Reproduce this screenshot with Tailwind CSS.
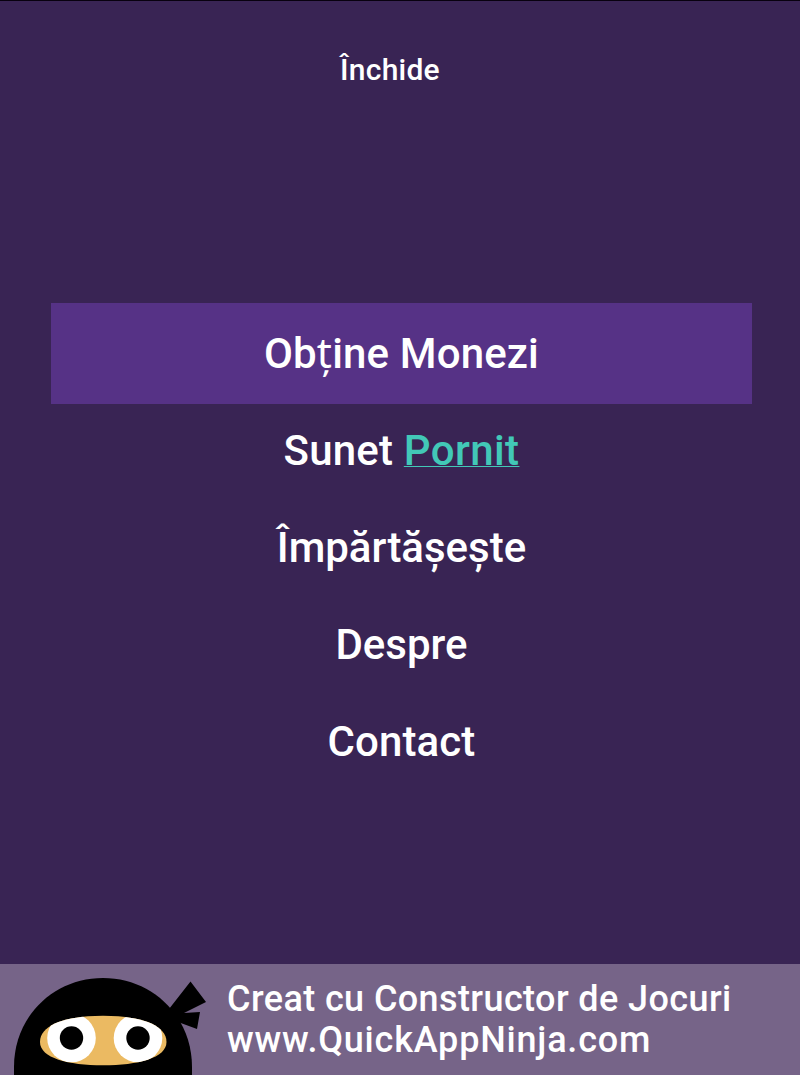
<!DOCTYPE html>
<html lang="ro">
<head>
  <meta charset="UTF-8" />
  <title>Meniu</title>
  <meta name="viewport" content="width=device-width, initial-scale=1" />
  <script src="https://cdn.jsdelivr.net/npm/@tailwindcss/browser@4"></script>
</head>
<body class="bg-[#392454] text-white font-['Roboto',sans-serif] font-medium">
  <div class="w-[800px] h-[1075px] flex flex-col overflow-hidden border-t border-[#08000f]">
    <header class="h-[302px] pt-[49px] pr-5 text-center">
      <button class="text-[30px] leading-10 tracking-[0.25px]">Închide</button>
    </header>

    <nav class="ml-[51px] w-[701px] flex flex-col text-[42px] text-center whitespace-nowrap">
      <a class="h-[101px] leading-[101px] tracking-[0.15px] bg-[#563286]">Ob<span class="font-['Noto_Sans',sans-serif] font-normal leading-none">ț</span>ine Monezi</a>
      <a class="h-[93px] mb-1 leading-[93px] tracking-[0.2px]">Sunet <span class="text-[#42c8b7] tracking-[0.4px] underline decoration-1 underline-offset-[1px] [text-decoration-skip-ink:none]">Pornit</span></a>
      <a class="h-[93px] mb-1 leading-[93px]">Împărtășește</a>
      <a class="h-[93px] mb-1 leading-[93px]">Despre</a>
      <a class="h-[93px] leading-[93px] tracking-[0.1px]">Contact</a>
    </nav>

    <footer class="mt-auto h-[111px] shrink-0 flex bg-[#766488]">
      <svg class="w-[227px] h-[111px] shrink-0" viewBox="0 964 227 111">
        <!-- head -->
        <path d="M14 1076V1067C14 1016 54 978 103 978S192 1016 192 1067V1076Z" fill="#000" />
        <!-- knot -->
        <path d="M169 1009L190.500 981.500L206 1002L184 1013L200 1012L197 1029L178 1022Z" fill="#000" />
        <!-- eyes -->
        <clipPath id="mask">
          <path d="M40 1042C40 1024 68 1015.700 103 1015.700S166.500 1024 166.500 1042C166.500 1058 138 1065.300 103 1065.300S40 1058 40 1042Z" />
        </clipPath>
        <g clip-path="url(#mask)">
          <rect x="36" y="1010" width="134" height="60" fill="#ebba62" />
          <circle cx="71.500" cy="1038" r="24.300" fill="#fff" />
          <circle cx="138" cy="1038" r="24.300" fill="#fff" />
          <circle cx="71.500" cy="1038" r="11.700" fill="#000" />
          <circle cx="138" cy="1038" r="11.700" fill="#000" />
        </g>
      </svg>
      <p class="pt-[15px] text-[36px] leading-[41px] tracking-[0.4px] whitespace-nowrap">
        Creat cu Constructor de Jocuri<br />
        <span class="tracking-[0.8px]">www.QuickAppNinja.com</span>
      </p>
    </footer>
  </div>
</body>
</html>
